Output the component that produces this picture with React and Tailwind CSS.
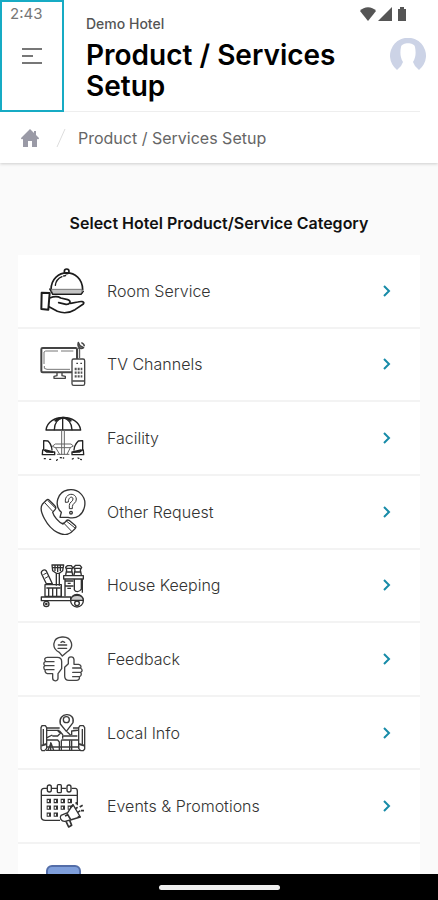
import React from 'react';

function RoomServiceIcon() {
  return (
    <svg viewBox="30 24 138 138" className="size-full" fill="none" stroke="#1c1c1c" strokeWidth="5" strokeLinecap="round" strokeLinejoin="round">
      <path d="M63 89C64 22 157 22 158 89" />
      <circle cx="110" cy="34" r="7" />
      <path d="M76 76C78 61 86 54 96 50M101 48L107 47" strokeWidth="4" />
      <path d="M65 88H156V102H70Z" fill="#c4c4c4" stroke="#777" strokeWidth="3" />
      <path d="M59 87L68 103H153L160 94" strokeWidth="4" />
      <path d="M35 98L59 99 55 149 34 147Z" strokeWidth="6" />
      <path d="M59 114C72 109 83 108 92 114L113 119C126 123 119 134 108 133L86 128M57 140L82 154C100 161 120 158 135 149L160 132C166 123 151 124 143 126L122 130" />
    </svg>
  );
}

function TvIcon() {
  return (
    <svg viewBox="30 24 138 138" className="size-full" fill="none" stroke="#444" strokeWidth="4" strokeLinejoin="round">
      <rect x="34" y="45" width="107" height="73" rx="4" strokeWidth="6" />
      <path d="M42 93V57L47 54H84M93 54H130M43 99V106L51 109H120" strokeWidth="3" stroke="#777" />
      <path d="M81 120V128L72 130V136H106V130L96 128V120" />
      <rect x="126" y="78" width="38" height="79" rx="5" fill="white" />
      <path d="M127 144H163M139 91H144M151 91H156" />
      <path d="M134 108H157M134 119H157M134 130H157" strokeWidth="7" strokeDasharray="6 3" stroke="#555" />
      <path d="M143 77V48L149 43V75" strokeWidth="3" />
      <path d="M145 28L150 38 161 44C152 51 140 43 145 28ZM154 29C160 31 163 35 163 40" fill="#777" />
    </svg>
  );
}

function FacilityIcon() {
  return (
    <svg viewBox="30 21 138 138" className="size-full" fill="none" stroke="#222" strokeWidth="4" strokeLinecap="round" strokeLinejoin="round">
      <path d="M48 66C54 16 145 16 152 66Z" />
      <path d="M73 65C73 44 84 33 99 29C115 33 125 45 126 65M98 29V64" />
      <path d="M76 38C84 31 93 29 99 29C109 29 117 32 122 38" strokeWidth="6" />
      <path d="M95 67V139M103 67V139M68 114L76 108H123L130 114L120 119H77ZM77 119L89 139M121 119L111 139M82 139H117" stroke="#666" strokeWidth="3" />
      <path d="M41 98L54 99C60 105 65 112 66 126M41 98V125L50 132H74V140H37L38 126M158 98L145 99C139 105 133 112 132 126M158 98V125L149 132H126V140H161L160 126" />
      <path d="M46 127L67 132M153 127L131 132" strokeWidth="6" />
      <path d="M43 152H48M59 154H65M80 157L84 153M91 149L101 150M127 153L133 150M144 150L154 155" strokeDasharray="3 6" />
    </svg>
  );
}

function RequestIcon() {
  return (
    <svg viewBox="30 27 138 138" className="size-full" fill="none" stroke="#333" strokeWidth="4" strokeLinecap="round" strokeLinejoin="round">
      <path d="M90 112L94 97C71 76 82 36 113 30C144 24 169 49 164 78C159 104 141 119 114 112Z" />
      <path d="M49 61L37 73C24 91 52 142 82 157C104 169 121 163 132 149C140 142 139 139 134 135L117 121C113 119 109 121 106 126L99 132C85 127 71 108 68 97L75 89C79 84 78 80 73 76L57 60C54 57 52 58 49 61Z" />
      <path d="M45 69L68 94M100 128L125 154M55 63L75 83M109 123L134 143" strokeWidth="3" />
      <path d="M106 66C102 39 137 35 139 57C140 69 127 70 127 80V86H118V76C118 65 129 66 129 57C129 48 115 49 115 65Z" strokeWidth="3" />
      <circle cx="123" cy="98" r="4" />
    </svg>
  );
}

function HouseKeepingIcon() {
  return (
    <svg viewBox="30 27 138 138" className="size-full" fill="none" stroke="#303030" strokeWidth="4" strokeLinejoin="round">
      <path d="M35 63C31 55 42 46 49 54L67 92H49Z" />
      <path d="M40 65L50 60M45 76L55 70" strokeWidth="3" />
      <path d="M66 36H101L98 53 88 61H79L68 53ZM67 44H99M75 36V54M83 36V57M91 36V54M79 61V98M88 61V98" />
      <path d="M45 95H94V130H45ZM49 105H91M56 105V130M68 105V130M80 105V130" />
      <path d="M107 66L110 51 107 43 112 38H124L128 44 125 51 128 66M132 66L135 51 131 43 137 37H150L155 43 151 51 154 66M109 46H125M134 46H153M108 57H127M132 57H154" />
      <path d="M101 68H160V78H101ZM105 78V130M157 78V119M133 78L154 78V108C148 119 136 117 133 110ZM106 84H130M106 99H130M113 91H122M112 106H123" />
      <path d="M34 132H122V143H34ZM94 99V132" />
      <circle cx="141" cy="143" r="19" fill="white" />
      <path d="M122 142C123 123 159 122 160 142Z" fill="#ccc" />
      <circle cx="49" cy="153" r="8" />
      <circle cx="141" cy="151" r="7" />
      <circle cx="49" cy="153" r="2" />
    </svg>
  );
}

function FeedbackIcon() {
  return (
    <svg viewBox="30 24 138 138" className="size-full" fill="none" stroke="#444" strokeWidth="4" strokeLinecap="round" strokeLinejoin="round">
      <path d="M88 73C64 62 66 29 96 27C126 25 135 58 111 72L97 84Z" />
      <path d="M85 51H110M84 61H110M93 43L98 40 104 43" />
      <path d="M84 137V151C83 162 68 160 68 150V137H52C45 135 44 128 46 126C40 123 40 115 45 113C39 109 41 102 47 100C41 94 45 88 52 88H82C93 88 95 94 95 101V122L84 137ZM49 101H72M46 113H72M48 125H72" />
      <path d="M115 107V95C115 84 131 84 132 95V109H146C153 111 155 116 151 120C158 123 158 130 152 133C156 139 153 145 148 146C150 154 145 157 139 157H117C106 157 104 151 104 144V118ZM128 120H151M128 133H152M128 146H148" />
    </svg>
  );
}

function LocalInfoIcon() {
  return (
    <svg viewBox="30 23 138 138" className="size-full" fill="none" stroke="#3b3b3b" strokeWidth="4" strokeLinejoin="round">
      <path d="M49 77H89M129 77H147M49 84H88M130 84H147M50 134H148M48 144H150" />
      <path d="M36 70H46L50 76V138L44 145H36L33 140V76ZM160 70H150L146 76V138L152 145H160L164 140V76ZM40 80V126M157 80V126" />
      <path d="M34 130L50 125M163 130L147 125" strokeWidth="6" />
      <path d="M109 87L91 65C82 30 137 27 129 61Z" fill="white" />
      <circle cx="109" cy="52" r="9" />
      <path d="M51 106L67 98M82 84L91 93 83 101H67M88 85L99 98M51 113H83L88 119V144M94 114V144M94 113H146M125 98V86L143 84M98 109V101H142" />
      <path d="M54 144L63 122 71 144M62 120V145M119 114V144M125 114V144M111 88L122 99" />
    </svg>
  );
}

function EventsIcon() {
  return (
    <svg viewBox="30 24 138 138" className="size-full" fill="none" stroke="#333" strokeWidth="4" strokeLinejoin="round">
      <path d="M52 40H42C36 40 34 44 34 49V127C34 133 39 136 46 136H90M125 40H136C141 40 142 44 142 49V91M34 61H142M65 40H81M95 40H109" />
      <rect x="52" y="30" width="12" height="21" rx="6" />
      <rect x="82" y="29" width="12" height="24" rx="3" />
      <rect x="111" y="30" width="12" height="21" rx="6" />
      <path d="M50 78H130M50 98H130M50 119H87" strokeWidth="13" strokeDasharray="13 8" />
      <path d="M53 78H130M53 98H130M53 119H87" stroke="white" strokeWidth="6" strokeDasharray="4 17" />
      <path d="M93 121L113 113 129 89 151 126 121 135 105 139C94 140 87 129 93 121Z" fill="white" />
      <path d="M111 115L122 134M129 89L125 95M151 126L143 125M136 101L143 97M143 112L151 107M108 139L116 156 125 151 119 136M139 88V81M149 96L158 91M153 107H162M105 123L114 119" strokeWidth="5" />
    </svg>
  );
}

const CATEGORIES = [
  { name: 'Room Service', icon: RoomServiceIcon },
  { name: 'TV Channels', icon: TvIcon },
  { name: 'Facility', icon: FacilityIcon },
  { name: 'Other Request', icon: RequestIcon },
  { name: 'House Keeping', icon: HouseKeepingIcon },
  { name: 'Feedback', icon: FeedbackIcon },
  { name: 'Local Info', icon: LocalInfoIcon },
  { name: 'Events & Promotions', icon: EventsIcon },
];

function StatusBar() {
  return (
    <div className="pointer-events-none absolute inset-x-0 top-0 z-20 flex h-7 items-center justify-between pr-[30px] pl-[10px] text-[#777]">
      <span className="text-[15px] leading-5">2:43</span>
      <div className="flex items-center">
        <svg viewBox="0 0 16 14" className="h-[14px] w-4" fill="#555">
          <path d="M0 4C4-1 12-1 16 4L8 14Z" />
        </svg>
        <svg viewBox="0 0 14 14" className="mr-1 ml-[2px] size-[14px]" fill="#555">
          <path d="M14 0V14H0Z" />
        </svg>
        <svg viewBox="0 0 12 14" className="h-[14px] w-3" fill="#555">
          <path d="M4 0H8V2H10V14H2V2H4Z" />
        </svg>
      </div>
    </div>
  );
}

function Header() {
  return (
    <header className="relative z-10 bg-white shadow-[0_1px_3px_rgba(0,0,0,0.18)]">
      <div className="flex">
        <button type="button" aria-label="Open menu" className="flex w-16 shrink-0 items-center justify-center border-2 border-[#17abc4]">
          <svg viewBox="0 0 20 16" className="h-4 w-5" stroke="#777" strokeWidth="2">
            <path d="M0 1H20M0 8H11M0 15H20" />
          </svg>
        </button>
        <div className="mr-[18px] flex flex-1 border-b border-[#eee] pt-4 pb-[9px] pl-[22px]">
          <div className="flex-1">
            <p className="text-[14px] leading-4 font-medium text-[#555]">Demo Hotel</p>
            <h1 className="mt-2 text-[28px] leading-[31px] font-semibold text-black">
              Product / Services Setup
            </h1>
          </div>
          <button type="button" aria-label="Profile" className="mt-[22px] -mr-[6px] size-9 shrink-0 self-start">
            <svg viewBox="0 0 36 36" className="size-full">
              <path d="M7 32A18 18 0 1 1 29 32L25 28 23 24C26 19 26 14 25 9C24 4 12 4 11 9C10 14 10 19 13 24L11 28Z" fill="#ccd3e6" />
            </svg>
          </button>
        </div>
      </div>
      <nav aria-label="Breadcrumb" className="flex h-[51px] items-center pl-5 text-[16px] text-[#666]">
        <a href="#" aria-label="Home">
          <svg viewBox="0 0 20 20" className="size-5" fill="#9a9aa6">
            <path d="M10 1L1 10Q1 12 3 11V19H8V13H12V19H17V11Q19 12 19 10L16 7V3H14V5Z" />
          </svg>
        </a>
        <svg viewBox="0 0 10 18" className="mr-3 ml-4 h-[18px] w-[10px]" stroke="#ddd">
          <path d="M1 18L9 0" />
        </svg>
        <a href="#">Product / Services Setup</a>
      </nav>
    </header>
  );
}

function CategoryRow({ name, icon: Icon }) {
  return (
    <li className="flex min-h-16 flex-1 border-b-2 border-[#f3f3f3] bg-white">
      <button type="button" className="flex flex-1 items-center pr-[29px] pl-[22px] text-left">
        <span className="mr-[21px] size-[46px] shrink-0">
          <Icon />
        </span>
        <span className="flex-1 text-[16px] leading-6 font-light text-[#333]">{name}</span>
        <svg viewBox="0 0 8 12" className="h-3 w-2" fill="none" stroke="#178ba8" strokeWidth="2">
          <path d="M1 1L6 6L1 11" />
        </svg>
      </button>
    </li>
  );
}

function App() {
  return (
    <div className="relative flex h-screen flex-col overflow-hidden bg-[#fafafa] font-['Inter',sans-serif]">
      <Header />
      <StatusBar />
      <main className="flex min-h-0 flex-1 flex-col px-[18px]">
        <h2 className="mt-12 mb-5 text-center text-[16px] leading-6 font-semibold text-[#111]">
          Select Hotel Product/Service Category
        </h2>
        <ul className="flex min-h-0 flex-1 flex-col overflow-hidden">
          {CATEGORIES.map(c => <CategoryRow key={c.name} name={c.name} icon={c.icon} />)}
          <li className="flex h-[30px] shrink-0 overflow-hidden bg-white pt-[21px] pl-7">
            <div className="h-9 w-[35px] shrink-0 rounded-md border-2 border-[#536da8] bg-[#7f9fdb]" />
          </li>
        </ul>
      </main>
      <footer className="flex h-[26px] shrink-0 items-center justify-center bg-black">
        <div className="h-[5px] w-[121px] rounded-full bg-[#eee]" />
      </footer>
    </div>
  );
}

export default App;
